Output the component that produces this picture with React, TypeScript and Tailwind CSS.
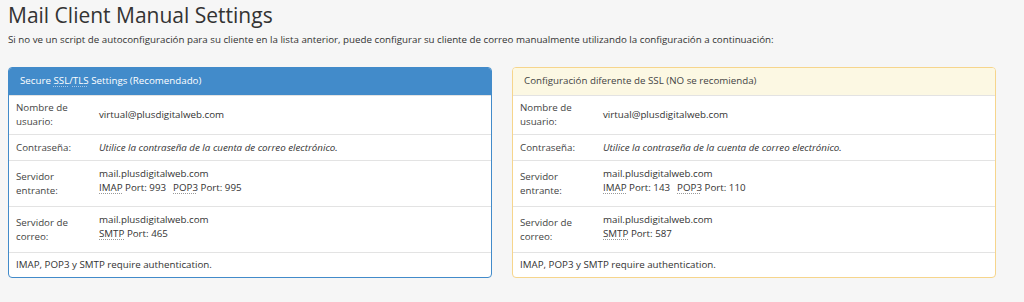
import React from "react"

const Abbr = (props: any) => (
    <span className="underline decoration-dotted decoration-[#999] underline-offset-2">{props.children}</span>
)

function Row(props: any) {
    return (
        <div className={"flex border-t border-[#e3e3e3] " + props.h}>
            <div className="w-[90px] shrink-0 pl-[7px] pr-2 flex items-center leading-[14px] text-[#444]">{props.label}</div>
            <div className={"flex-1 pr-2 leading-[14px] text-[#333] " + (props.top ? "pt-[6px]" : "flex items-center")}>{props.children}</div>
        </div>
    )
}

function Panel(props: any) {
    const blue = props.kind === "blue"
    return (
        <div className={"w-[484px] rounded-[4px] border bg-white overflow-hidden " + (blue ? "border-[#428bca]" : "border-[#f6d58c]")}>
            <div className={"h-[27px] flex items-center px-[11px] " + (blue ? "bg-[#428bca] text-white" : "bg-[#fcf8e3] text-[#444]")}>
                {props.title}
            </div>
            <Row h="h-[39px]" label={<span>Nombre de<br />usuario:</span>}>virtual@plusdigitalweb.com</Row>
            <Row h="h-[26px]" label="Contraseña:"><i>Utilice la contraseña de la cuenta de correo electrónico.</i></Row>
            <Row h="h-[46px]" top label={<span>Servidor<br />entrante:</span>}>
                <div>mail.plusdigitalweb.com</div>
                <div><Abbr>IMAP</Abbr> Port: {props.imap}<span className="ml-[7px]"><Abbr>POP3</Abbr> Port: {props.pop}</span></div>
            </Row>
            <Row h="h-[46px]" top label={<span>Servidor de<br />correo:</span>}>
                <div>mail.plusdigitalweb.com</div>
                <div><Abbr>SMTP</Abbr> Port: {props.smtp}</div>
            </Row>
            <div className="h-[25px] border-t border-[#e3e3e3] flex items-center pl-[7px] text-[#333]">IMAP, POP3 y SMTP require authentication.</div>
        </div>
    )
}

export default function App() {
    return (
        <div className="w-[1024px] h-[302px] bg-[#f6f6f6] px-2 text-[9.75px]" style={{ fontFamily: '"Open Sans", sans-serif' }}>
            <h1 className="text-[21px] leading-[30px] text-[#333] font-normal">Mail Client Manual Settings</h1>
            <p className="mt-[3px] leading-[14px] text-[#333]">Si no ve un script de autoconfiguración para su cliente en la lista anterior, puede configurar su cliente de correo manualmente utilizando la configuración a continuación:</p>
            <div className="flex gap-[20px] mt-[20px]">
                <Panel kind="blue" title={<span>Secure <span className="underline decoration-dotted decoration-[#a8c6e6] underline-offset-2">SSL</span>/<span className="underline decoration-dotted decoration-[#a8c6e6] underline-offset-2">TLS</span> Settings (Recomendado)</span>} imap="993" pop="995" smtp="465" />
                <Panel kind="yellow" title="Configuración diferente de SSL (NO se recomienda)" imap="143" pop="110" smtp="587" />
            </div>
        </div>
    )
}
